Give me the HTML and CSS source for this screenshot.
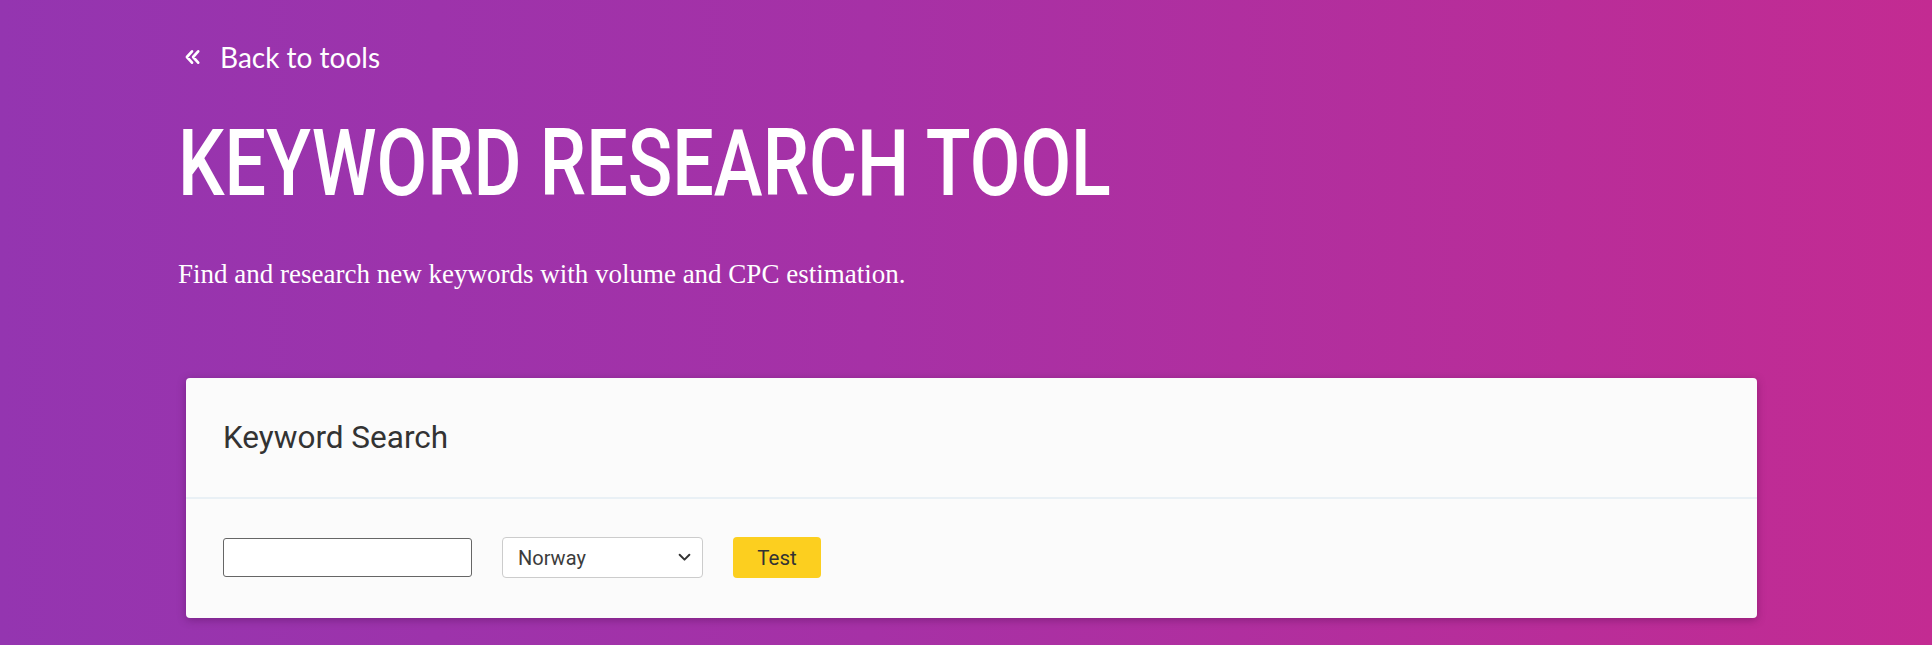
FILE: index.html
```html
<!DOCTYPE html>
<html lang="en">
<head>
<meta charset="utf-8">
<title>Keyword Research Tool</title>
<link rel="stylesheet" href="styles.css">
</head>
<body>
<main class="page">
  <header class="hero">
    <a class="back" href="#">
      <svg class="back-icon" viewBox="0 0 16 16" width="18" height="18" aria-hidden="true">
        <path d="M8 3 L3.5 8 L8 13 M13.5 3 L9 8 L13.5 13" fill="none" stroke="#fff" stroke-width="2.4" stroke-linecap="round" stroke-linejoin="round"/>
      </svg>
      <span>Back to tools</span>
    </a>
    <h1 class="title">KEYWORD RESEARCH TOOL</h1>
    <p class="lead">Find and research new keywords with volume and CPC estimation.</p>
  </header>

  <section class="card">
    <div class="card-head">
      <h2 class="card-title">Keyword Search</h2>
    </div>
    <form class="card-body">
      <input class="field" type="text" aria-label="Keyword">
      <div class="select-wrap">
        <select class="select" aria-label="Country">
          <option>Norway</option>
          <option>Sweden</option>
          <option>Denmark</option>
        </select>
        <svg class="select-caret" viewBox="0 0 12 8" width="13" height="9" aria-hidden="true">
          <path d="M1.5 1.5 L6 6 L10.5 1.5" fill="none" stroke="#333" stroke-width="1.8" stroke-linecap="round" stroke-linejoin="round"/>
        </svg>
      </div>
      <button class="btn" type="button">Test</button>
    </form>
  </section>
</main>
</body>
</html>
```
FILE: styles.css
```css
* { box-sizing: border-box; }

html, body {
  margin: 0;
  height: 100%;
}

body {
  background: linear-gradient(90deg, #9435b0 0%, #a631a6 45%, #c32b92 100%);
  overflow: hidden;
}

.page {
  padding: 0 175px 0 186px;
}

.back {
  display: inline-flex;
  align-items: center;
  gap: 19px;
  margin-top: 40px;
  margin-left: -3px;
  color: #fff;
  text-decoration: none;
  font-family: Lato, "Open Sans", sans-serif;
  font-size: 28px;
  line-height: 34px;
}

.back-icon {
  width: 18px;
  height: 18px;
  margin-top: -1px;
}

/* condensed display heading */
.title {
  margin: 35px 0 0 -8px;
  color: #fff;
  font-family: Roboto, "Liberation Sans", sans-serif;
  font-weight: 500;
  font-size: 92px;
  line-height: 110px;
  white-space: nowrap;
  transform: scaleX(0.8);
  transform-origin: left center;
}

.lead {
  margin: 39px 0 0 -8px;
  color: #fff;
  font-family: "Liberation Serif", "Times New Roman", serif;
  font-size: 27px;
  line-height: 32px;
}

.card {
  margin-top: 88px;
  background: #fbfbfb;
  border-radius: 4px;
  box-shadow: 0 2px 8px rgba(60, 0, 60, 0.35);
}

.card-head {
  height: 121px;
  padding: 0 37px;
  display: flex;
  align-items: center;
  border-bottom: 2px solid #e9f0f5;
}

.card-title {
  margin: 0;
  font-family: Roboto, "Open Sans", sans-serif;
  font-weight: normal;
  font-size: 31.5px;
  color: #333;
}

.card-body {
  display: flex;
  align-items: center;
  gap: 30px;
  padding: 38px 37px 40px;
  margin: 0;
}

.field {
  width: 249px;
  height: 39px;
  border: 1px solid #666;
  border-radius: 3px;
  background: #fff;
}

.select-wrap {
  position: relative;
}

.select {
  appearance: none;
  -webkit-appearance: none;
  width: 201px;
  height: 41px;
  padding: 0 36px 0 15px;
  border: 1px solid #ccc;
  border-radius: 4px;
  background: #fff;
  font-family: Roboto, "Open Sans", sans-serif;
  font-size: 20px;
  color: #3c3c3c;
}

.select-caret {
  position: absolute;
  right: 12px;
  top: 16px;
  pointer-events: none;
}

.btn {
  width: 88px;
  height: 41px;
  border: 0;
  border-radius: 4px;
  background: #fccf1f;
  font-family: Roboto, "Open Sans", sans-serif;
  font-size: 20.5px;
  color: #333;
}
```
